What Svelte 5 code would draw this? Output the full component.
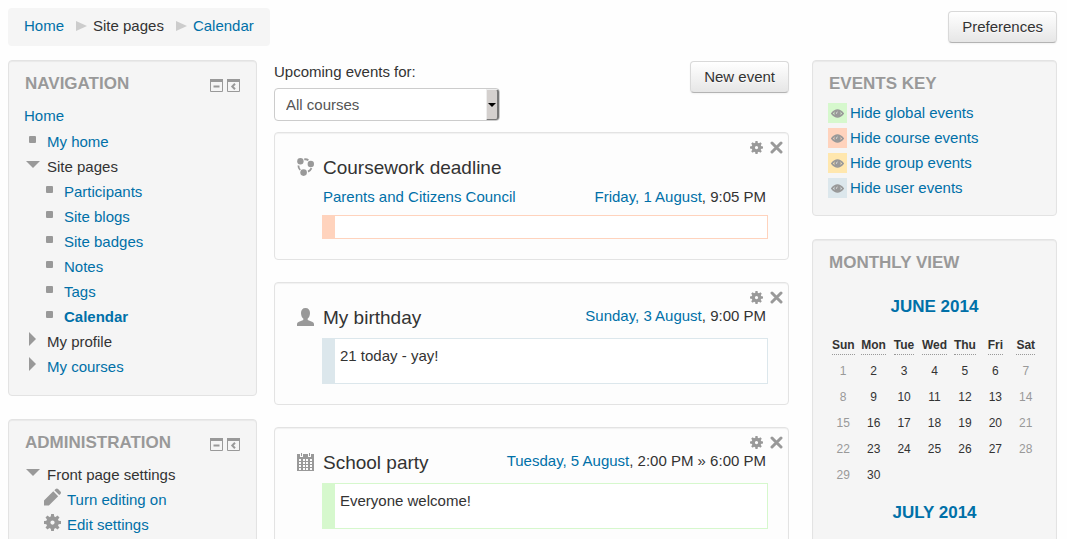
<script>
  const pages = ['Participants', 'Site blogs', 'Site badges', 'Notes', 'Tags', 'Calendar']

  const eventKey = [
    { type: 'global', label: 'Hide global events' },
    { type: 'course', label: 'Hide course events' },
    { type: 'group',  label: 'Hide group events' },
    { type: 'user',   label: 'Hide user events' },
  ]

  const events = [
    {
      type: 'course',
      name: 'Coursework deadline',
      course: 'Parents and Citizens Council',
      day: 'Friday, 1 August',
      time: '9:05 PM',
      description: '',
    },
    { type: 'user',   name: 'My birthday',  day: 'Sunday, 3 August',  time: '9:00 PM', description: '21 today - yay!' },
    { type: 'global', name: 'School party', day: 'Tuesday, 5 August', time: '2:00 PM » 6:00 PM', description: 'Everyone welcome!' },
  ]

  const weekdays = ['Sun', 'Mon', 'Tue', 'Wed', 'Thu', 'Fri', 'Sat']

  // June 2014 starts on a Sunday, so no leading blanks
  const weeks = []
  for (let first = 1; first <= 30; first += 7) {
    weeks.push(weekdays.map((_, i) => (first + i <= 30 ? first + i : '')))
  }

  let course = 'all'
</script>

{#snippet gear(size)}
  <svg width={size} height={size} viewBox="0 0 16 16" aria-hidden="true">
    <circle cx="8" cy="8" r="4" fill="none" stroke="#999" stroke-width="4" />
    {#each [0, 45, 90, 135, 180, 225, 270, 315] as angle}
      <path d="M6.3 3L6.7 0h2.6l.4 3z" fill="#999" transform="rotate({angle} 8 8)" />
    {/each}
  </svg>
{/snippet}

{#snippet blockHeader(title)}
  <div class="block-header">
    <h2>{title}</h2>
    <div class="block-actions">
      <button class="icon-btn" aria-label="Hide {title} block">
        <svg width="13" height="13" viewBox="0 0 13 13">
          <path d="M.5 1v11.5h12V1z" fill="none" stroke="#999" />
          <path d="M0 0h13v3H0z" fill="#999" />
          <path d="M3.5 7.5h6" stroke="#999" stroke-width="2" />
        </svg>
      </button>
      <button class="icon-btn" aria-label="Dock {title} block">
        <svg width="13" height="13" viewBox="0 0 13 13">
          <path d="M.5 1v11.5h12V1z" fill="none" stroke="#999" />
          <path d="M0 0h13v3H0z" fill="#999" />
          <path d="M8 4.8L5.3 7.5 8 10.2" fill="none" stroke="#999" stroke-width="2" />
        </svg>
      </button>
    </div>
  </div>
{/snippet}

{#snippet eventIcon(type)}
  <svg class="event-icon" width="17" height="18" viewBox="0 0 17 18" aria-hidden="true">
    {#if type === 'course'}
      <g fill="#999">
        <circle cx="3.4" cy="3.2" r="3.2" />
        <circle cx="13.8" cy="6" r="3.2" />
        <circle cx="6.6" cy="14.600" r="3.300" />
      </g>
      <g fill="none" stroke="#999" stroke-width="1.800">
        <path d="M7.200 1.400Q9.600.900 11.400 2.200" />
        <path d="M1.400 7.400Q1.400 10 3.200 12" />
        <path d="M14.500 10.200Q13.400 12.700 11 13.700" />
      </g>
    {:else if type === 'user'}
      <path
        fill="#999"
        d="M8.500 0C5.600 0 4 2.100 4 5c0 2.600 1 4.600 2.300 5.600v1.400L2 13.700C.6 14.300 0 15 0 16.300V18h17v-1.700c0-1.300-.6-2-2-2.600l-4.300-1.700v-1.400C12 9.600 13 7.600 13 5 13 2.100 11.400 0 8.500 0z"
      />
    {:else}
      <path d="M0 1h3v3h3V1h5v3h3V1h3v17H0z" fill="#999" />
      <path d="M4.500 0v3M12.500 0v3" stroke="#999" />
      <g fill="#fdfdfd">
        {#each [6, 9, 12, 15] as y}
          {#each [2, 6, 9, 13] as x}
            <rect {x} {y} width="2" height="2" />
          {/each}
        {/each}
      </g>
    {/if}
  </svg>
{/snippet}

<div class="page">
  <header class="page-nav">
    <nav class="breadcrumb" aria-label="Breadcrumb">
      <a href="#home">Home</a>
      <span class="separator"></span>
      <span>Site pages</span>
      <span class="separator"></span>
      <a href="#calendar">Calendar</a>
    </nav>
    <button class="btn">Preferences</button>
  </header>

  <div class="columns">
    <aside class="side">
      <section class="block">
        {@render blockHeader('Navigation')}
        <a class="row root" href="#home">Home</a>
        <ul class="tree">
          <li class="row"><span class="marker"><i class="bullet"></i></span><a href="#my">My home</a></li>
          <li>
            <div class="row"><span class="marker"><i class="open"></i></span>Site pages</div>
            <ul class="tree nested">
              {#each pages as page}
                <li class="row">
                  <span class="marker"><i class="bullet"></i></span>
                  <a href="#{page}" class:current={page === 'Calendar'}>{page}</a>
                </li>
              {/each}
            </ul>
          </li>
          <li class="row"><span class="marker"><i class="closed"></i></span>My profile</li>
          <li class="row"><span class="marker"><i class="closed"></i></span><a href="#courses">My courses</a></li>
        </ul>
      </section>

      <section class="block">
        {@render blockHeader('Administration')}
        <ul class="tree">
          <li>
            <div class="row"><span class="marker"><i class="open"></i></span>Front page settings</div>
            <ul class="tree settings">
              <li class="row">
                <svg width="17" height="18" viewBox="0 0 18 18" aria-hidden="true">
                  <path fill="#999" d="M0 18v-5.200L9.800 3 15 8.200 5.200 18zM11 1.900L12.300.6q1.300-1.200 2.600 0l2.500 2.500q1.200 1.300 0 2.600L16.100 7z" />
                </svg>
                <a href="#editing">Turn editing on</a>
              </li>
              <li class="row">{@render gear(17)}<a href="#settings">Edit settings</a></li>
            </ul>
          </li>
        </ul>
      </section>
    </aside>

    <main>
      <div class="toolbar">
        <div class="filter">
          <label for="course">Upcoming events for:</label>
          <div class="select">
            <select id="course" bind:value={course}>
              <option value="all">All courses</option>
            </select>
            <span class="select-arrow"></span>
          </div>
        </div>
        <button class="btn">New event</button>
      </div>

      {#each events as event}
        <article class="event {event.type}">
          <div class="commands">
            <button class="icon-btn" aria-label="Edit event">{@render gear(13)}</button>
            <button class="icon-btn" aria-label="Delete event">
              <svg width="13" height="13" viewBox="0 0 13 13">
                <path d="M2 2l9 9M11 2l-9 9" stroke="#999" stroke-width="3" stroke-linecap="round" />
              </svg>
            </button>
          </div>
          {@render eventIcon(event.type)}
          <div class="event-body">
            <div class="event-line">
              <h3>{event.name}</h3>
              {#if !event.course}
                <span class="date"><a href="#day">{event.day}</a>, {event.time}</span>
              {/if}
            </div>
            {#if event.course}
              <div class="event-line course-line">
                <a href="#course">{event.course}</a>
                <span class="date"><a href="#day">{event.day}</a>, {event.time}</span>
              </div>
            {/if}
            <div class="description">{event.description}</div>
          </div>
        </article>
      {/each}
    </main>

    <aside class="side">
      <section class="block key-block">
        <div class="block-header"><h2>Events key</h2></div>
        <ul class="key">
          {#each eventKey as item}
            <li class={item.type}>
              <span class="swatch">
                <svg width="13" height="9" viewBox="0 0 13 9" aria-hidden="true">
                  <path d="M.8 4.500Q6.500-2.400 12.200 4.500 6.500 11.400.8 4.500z" fill="none" stroke="#999" stroke-width="1.600" />
                  <circle cx="6.500" cy="4.500" r="3.200" fill="#999" />
                  <path d="M5.500 4.600q-.2-1.200 1-1.600" fill="none" stroke="#eee" stroke-width=".9" />
                </svg>
              </span>
              <a href="#{item.type}">{item.label}</a>
            </li>
          {/each}
        </ul>
      </section>

      <section class="block">
        <div class="block-header"><h2>Monthly view</h2></div>
        <table>
          <caption><a href="#june">June 2014</a></caption>
          <thead>
            <tr>
              {#each weekdays as day}
                <th scope="col"><span>{day}</span></th>
              {/each}
            </tr>
          </thead>
          <tbody>
            {#each weeks as week}
              <tr>
                {#each week as day, i}
                  <td class:weekend={i === 0 || i === 6}>{day}</td>
                {/each}
              </tr>
            {/each}
          </tbody>
        </table>
        <h3 class="month"><a href="#july">July 2014</a></h3>
      </section>
    </aside>
  </div>
</div>

<style>
  :global(body) {
    margin:     0;
    background: #fefefe;
  }

  .page {
    box-sizing:  border-box;
    height:      100vh;
    overflow:    hidden;
    padding:     8px 10px 0 8px;
    font-family: 'Liberation Sans', Arial, sans-serif;
    font-size:   15px;
    line-height: 20px;
    color:       #333;
  }

  a {
    color:           #0070a8;
    text-decoration: none;
  }

  ul {
    list-style: none;
    margin:     0;
    padding:    0;
  }

  h2, h3 {
    margin: 0;
  }

  svg {
    display: block;
    flex:    none;
  }

  .page-nav {
    display:         flex;
    justify-content: space-between;
    align-items:     center;
    margin-bottom:   14px;
  }

  .breadcrumb {
    display:       flex;
    align-items:   center;
    padding:       8px 16px 10px;
    background:    #f5f5f5;
    border-radius: 4px;
  }

  .separator {
    margin:       0 6px 0 12px;
    border:       solid transparent;
    border-width: 5px 0 5px 11px;
    border-left-color: #ccc;
  }

  .btn {
    padding:       5px 13px;
    border:        1px solid #ccc;
    border-color:  #d9d9d9 #d9d9d9 #b3b3b3;
    border-radius: 4px;
    background:    linear-gradient(#fff, #e6e6e6);
    box-shadow:    inset 0 1px 0 rgba(255, 255, 255, 0.2), 0 1px 2px rgba(0, 0, 0, 0.05);
    font:          inherit;
    color:         #333;
    text-shadow:   0 1px 1px rgba(255, 255, 255, 0.75);
    cursor:        pointer;
  }

  .icon-btn {
    padding:    0;
    border:     0;
    background: none;
    cursor:     pointer;
  }

  .columns {
    display:     grid;
    grid-template-columns: 249fr 521fr 245fr;
    gap:         17px;
    align-items: start;
  }

  .side {
    display:        flex;
    flex-direction: column;
    gap:            23px;
  }

  .block {
    padding:       11px 15px 16px;
    background:    #f5f5f5;
    border:        1px solid #e3e3e3;
    border-radius: 4px;
    box-shadow:    inset 0 1px 1px rgba(0, 0, 0, 0.05);
  }

  .block-header {
    display:         flex;
    justify-content: space-between;
    align-items:     center;
    height:          24px;
    margin-bottom:   7px;
    padding:         0 1px;
  }

  .block-header h2 {
    font-size:      17px;
    color:          #999;
    text-transform: uppercase;
    text-shadow:    0 1px 0 rgba(255, 255, 255, 0.5);
  }

  .block-actions {
    display:     flex;
    gap:         4px;
    padding-top: 2px;
  }

  .row {
    display:     flex;
    align-items: center;
    height:      25px;
  }

  .root {
    margin-bottom: 1px;
  }

  .marker {
    display:         flex;
    justify-content: center;
    width:           17px;
    margin:          0 6px 5px 0;
  }

  .bullet {
    width:         7px;
    height:        7px;
    border-radius: 1px;
    background:    #999;
  }

  .open {
    border:       solid transparent;
    border-width: 7px 7px 0;
    border-top-color: #999;
  }

  .closed {
    border:       solid transparent;
    border-width: 7px 0 7px 7px;
    border-left-color: #999;
  }

  .nested {
    margin-left: 17px;
  }

  .settings {
    margin-left: 20px;
  }

  .settings svg {
    margin: 0 6px 5px 0;
  }

  .current {
    font-weight: bold;
  }

  main {
    margin-right: 6px;
  }

  .toolbar {
    display:         flex;
    justify-content: space-between;
    align-items:     flex-start;
    padding-top:     1px;
    margin-bottom:   11px;
  }

  .filter label {
    display:       block;
    padding:       1px 0 6px;
  }

  .select {
    position: relative;
    width:    226px;
  }

  select {
    appearance:    none;
    display:       block;
    box-sizing:    border-box;
    width:         100%;
    height:        33px;
    padding:       4px 11px;
    border:        1px solid #ccc;
    border-radius: 4px;
    background:    #fff;
    font:          inherit;
    color:         #555;
  }

  .select-arrow {
    position:        absolute;
    top:             1px;
    right:           1px;
    bottom:          1px;
    display:         flex;
    align-items:     center;
    justify-content: center;
    box-sizing:      border-box;
    width:           13px;
    background:      #d4d0ce;
    border:          solid;
    border-width:    1px 2px 1px 1px;
    border-color:    #eee #777 #777 #eee;
    border-radius:   0 3px 3px 0;
    pointer-events:  none;
  }

  .select-arrow::after {
    content:      '';
    border:       solid transparent;
    border-width: 4px 4px 0;
    border-top-color: #000;
  }

  .event {
    position:      relative;
    display:       flex;
    gap:           8px;
    margin-bottom: 22px;
    padding:       23px 20px 20px 22px;
    background:    #fdfdfd;
    border:        1px solid #e3e3e3;
    border-radius: 4px;
    box-shadow:    inset 0 1px 1px rgba(0, 0, 0, 0.05);
  }

  /* edit and delete sit over the corner of the card */
  .commands {
    position: absolute;
    top:      8px;
    right:    5px;
    display:  flex;
    gap:      7px;
  }

  .event-icon {
    margin-top: 2px;
  }

  .event-body {
    flex: 1;
  }

  .event-line {
    display:         flex;
    justify-content: space-between;
    padding:         0 2px 0 1px;
  }

  .event-line h3 {
    font-size:   19px;
    font-weight: normal;
    line-height: 24px;
  }

  .course-line {
    padding-top: 7px;
  }

  .description {
    margin-top:  8px;
    padding:     6px 5px 16px;
    border:      1px solid var(--type);
    border-left-width: 13px;
    background:  #fff;
    line-height: 22px;
  }

  .global { --type: #d6f8cd; }
  .course { --type: #ffd3bd; }
  .group  { --type: #ffe7ae; }
  .user   { --type: #dce7ec; }

  .key-block {
    padding-bottom: 15px;
  }

  .key-block .block-header {
    margin-bottom: 4px;
  }

  .key li {
    display:     flex;
    align-items: center;
    gap:         3px;
    height:      25px;
  }

  .swatch {
    display:         flex;
    align-items:     center;
    justify-content: center;
    box-sizing:      border-box;
    width:           19px;
    height:          20px;
    padding-top:     2px;
    background:      var(--type);
  }

  table {
    width:           100%;
    table-layout:    fixed;
    border-collapse: collapse;
    font-size:       12px;
    text-align:      center;
  }

  caption,
  .month {
    padding:        15px 0 14px;
    font-size:      17px;
    font-weight:    bold;
    line-height:    20px;
    text-align:     center;
    text-transform: uppercase;
  }

  th, td {
    height:  26px;
    padding: 0;
  }

  th {
    height: 27px;
  }

  th span {
    display:       inline-block;
    line-height:   17px;
    border-bottom: 1px dotted #999;
  }

  .weekend {
    color: #999;
  }
</style>
